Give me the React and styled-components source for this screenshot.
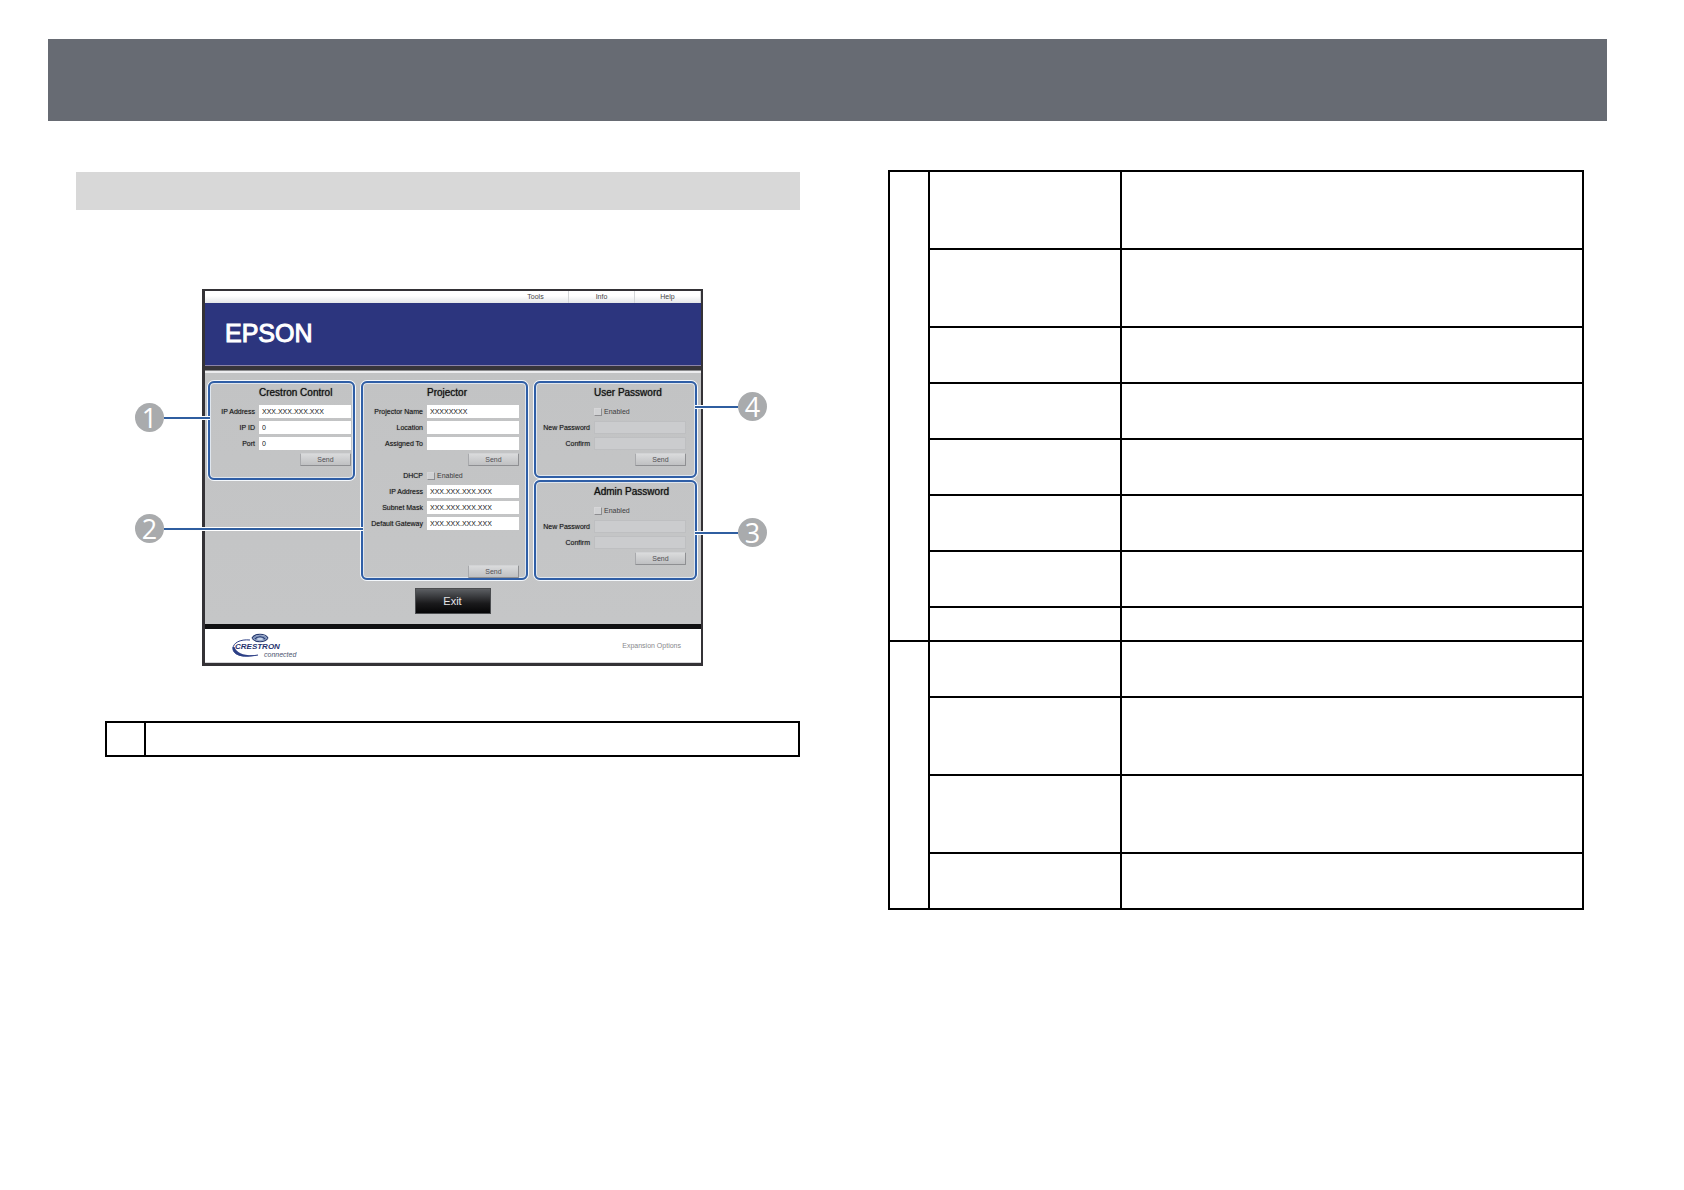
import React, { useId } from "react";
import styled, { createGlobalStyle } from "styled-components";

const GlobalStyle = createGlobalStyle`
  *, *::before, *::after { box-sizing: border-box; }
  body {
    margin: 0;
    background: #fff;
    color: #1c1c1e;
    font-family: "Liberation Sans", Arial, sans-serif;
  }
`;

const Page = styled.div`
  padding: 39px 0 48px;
`;

const Banner = styled.header`
  height: 82px;
  margin: 0 77px 0 48px;
  background: #676b73;
`;

const Columns = styled.main`
  display: grid;
  grid-template-columns: minmax(0, 724fr) minmax(0, 696fr);
  column-gap: 88px;
  align-items: start;
  margin: 49px 100px 0 76px;
`;

const LeftColumn = styled.div`
  padding-top: 2px;
`;

const SectionBar = styled.div`
  height: 38px;
  background: #d8d8d8;
`;

const Figure = styled.figure`
  width: 501px;
  margin: 79px 0 55px 126px;
`;

const Ruled = styled.table`
  width: ${(p) => (p.$indent ? `calc(100% - ${p.$indent}px)` : "100%")};
  margin-left: ${(p) => p.$indent || 0}px;
  border-collapse: collapse;
  table-layout: fixed;

  td {
    padding: 0;
    border: 2px solid #000;
  }
`;

const Col = styled.col`
  width: ${(p) => (p.$width ? `${p.$width}px` : "auto")};
`;

const Row = styled.tr`
  height: ${(p) => p.$height}px;
`;

const AppWindow = styled.div`
  border: solid #343236;
  border-width: 2px 2px 3px 3px;
`;

const MenuBar = styled.nav`
  display: flex;
  justify-content: flex-end;
  height: 12px;
  background: linear-gradient(#fff 40%, #e4e6e8);
`;

const MenuLink = styled.a`
  width: 66px;
  border-right: 1px solid #d4d6d8;
  color: #444;
  font-size: 7px;
  line-height: 12px;
  text-align: center;
  text-decoration: none;
`;

const Brand = styled.div`
  display: flex;
  align-items: center;
  height: 63px;
  padding: 0 20px 2px;
  background: #2c357e;
  border-bottom: 1px solid #8b83a8;
`;

const BrandName = styled.h1`
  margin: 0;
  color: #fff;
  font-size: 25px;
  line-height: 28px;
  font-weight: 400;
  -webkit-text-stroke: 1px #fff;
`;

const Body = styled.div`
  padding: 11px 4px 10px 3px;
  border-top: 4px solid #37353a;
  border-bottom: 5px solid #101012;
  background: linear-gradient(#8c8c8e 0 1px, #ececee 1px 3px, #c2c3c4 3px, #c5c6c7);
`;

const Panels = styled.div`
  display: grid;
  grid-template-columns: 147fr 167fr 163fr;
  gap: 6px;
  align-items: start;
  height: 199px;
`;

const Stack = styled.div`
  display: grid;
  grid-template-rows: 97fr 100fr;
  gap: 2px;
  height: 100%;
`;

const Panel = styled.section`
  position: relative;
  display: flex;
  flex-direction: column;
  gap: 3px;
  height: ${(p) => p.$height || "100%"};
  padding-right: ${(p) => p.$inset}px;
  border: 2px solid #2f5ea6;
  border-radius: 6px;
  box-shadow: 0 0 0 1px #f4f8fc, inset 0 0 0 1px #dfe6ee;
`;

const Line = styled.div`
  display: grid;
  grid-template-columns: minmax(0, 1fr) 92px;
  column-gap: 4px;
  align-items: center;
  min-height: 13px;
  margin-top: ${(p) => (p.$bottom ? "auto" : "0")};
`;

const PanelTitle = styled.h2`
  grid-column: 2;
  margin: 0;
  color: #111;
  font-size: 10px;
  line-height: 19px;
  font-weight: 400;
  white-space: nowrap;
  text-shadow: 0 0 1px #333;
`;

const Label = styled.label`
  color: #111;
  font-size: 7px;
  line-height: 13px;
  text-align: right;
  white-space: nowrap;
  text-shadow: 0 0 1px #777;
`;

const Input = styled.input`
  width: 100%;
  height: 13px;
  padding: 0 3px;
  border: 0;
  background: #fff;
  color: #111;
  font: 7px/13px "Liberation Sans", Arial, sans-serif;

  &:disabled {
    background: #cbccce;
    border: 1px solid #bebfc1;
  }
`;

const CheckLabel = styled.label`
  grid-column: 2;
  display: flex;
  align-items: center;
  gap: 2px;
  color: #3c3c40;
  font-size: 7px;
  line-height: 13px;
`;

const Check = styled.input`
  appearance: none;
  width: 8px;
  height: 8px;
  margin: 0;
  border: 1px solid;
  border-color: #d6d6d8 #8d8d90 #8d8d90 #d6d6d8;
  background: #d0d1d3;
`;

const SendButton = styled.button`
  grid-column: 2;
  justify-self: end;
  width: 51px;
  height: 13px;
  padding: 0;
  border: 1px solid;
  border-color: #d2d3d5 #8e8f92 #8e8f92 #a8a9ac;
  border-radius: 1px;
  background: linear-gradient(#dadbdc, #bfc0c2);
  color: #505054;
  font: 7px/11px "Liberation Sans", Arial, sans-serif;
`;

const ExitButton = styled.button`
  display: block;
  width: 76px;
  height: 26px;
  margin: 8px auto 0;
  padding: 0;
  border: 1px solid #4b4d50;
  background: linear-gradient(#5c5f63, #1a1a1c 60%, #050506);
  color: #e4e4e6;
  font: 11px/24px "Liberation Sans", Arial, sans-serif;
`;

const Footer = styled.footer`
  display: flex;
  align-items: center;
  justify-content: space-between;
  height: 34px;
  padding: 0 20px 0 26px;
  background: #fff;
  border-bottom: 1px solid #d5d5d8;
`;

const FooterLink = styled.a`
  color: #88888c;
  font-size: 7px;
  line-height: 8px;
  text-decoration: none;
`;

const LogoSvg = styled.svg`
  display: block;
  width: 68px;
  height: 28px;
  font-family: "Liberation Sans", Arial, sans-serif;
  font-style: italic;
`;

const Callout = styled.div`
  position: absolute;
  top: ${(p) => p.$top}px;
  ${(p) => p.$side}: 100%;
  display: flex;
  flex-direction: ${(p) => (p.$side === "left" ? "row" : "row-reverse")};
  align-items: center;
`;

const Leader = styled.span`
  width: ${(p) => p.$length}px;
  height: 2px;
  background: #2f5ea0;
  box-shadow: 0 1px #fff, 0 -1px #fff;
`;

const Badge = styled.span`
  width: 29px;
  height: 29px;
  border-radius: 50%;
  background: #a9abad;
  color: #fff;
  font: 400 27px/29px "Open Sans", sans-serif;
  text-align: center;
`;

function Marker({ number, side, top, length }) {
  return (
    <Callout $side={side} $top={top}>
      <Leader $length={length} />
      <Badge>{number}</Badge>
    </Callout>
  );
}

function Title({ children }) {
  return (
    <Line>
      <PanelTitle>{children}</PanelTitle>
    </Line>
  );
}

function Field({ label, value = "", disabled, type = "text" }) {
  const id = useId();
  return (
    <Line>
      <Label htmlFor={id}>{label}</Label>
      <Input id={id} type={type} defaultValue={value} disabled={disabled} />
    </Line>
  );
}

function Toggle({ label }) {
  const id = useId();
  return (
    <Line>
      {label && <Label htmlFor={id}>{label}</Label>}
      <CheckLabel htmlFor={id}>
        <Check id={id} type="checkbox" />
        Enabled
      </CheckLabel>
    </Line>
  );
}

function Send({ bottom }) {
  return (
    <Line $bottom={bottom}>
      <SendButton type="button">Send</SendButton>
    </Line>
  );
}

function PasswordPanel({ title, children }) {
  return (
    <Panel $inset={9}>
      <Title>{title}</Title>
      <Toggle />
      <Field label="New Password" type="password" disabled />
      <Field label="Confirm" type="password" disabled />
      <Send />
      {children}
    </Panel>
  );
}

function CrestronLogo() {
  return (
    <LogoSvg viewBox="0 0 68 28" role="img" aria-label="Crestron connected">
      <path
        d="M19 8C9 7 2 11 2 16.500c0 6 8 9.500 25 6.500"
        fill="none"
        stroke="#2c3f86"
        strokeWidth="1"
      />
      <path d="M1.500 15c0 8 9 12 26 8-13 1.400-22-1.500-24-8z" fill="#2c3f86" />
      <ellipse cx="29" cy="6" rx="7" ry="3" fill="#8296bd" />
      <path
        d="M21 6c3-5 13-5 16 0M21 6c3 5 13 5 16 0M24 7c2-3 8-3 10 0"
        fill="none"
        stroke="#24386f"
        strokeWidth="1.200"
      />
      <ellipse cx="29" cy="7" rx="3" ry="1.200" fill="#c4d2e8" />
      <text x="4" y="17" fontSize="8" fontWeight="700" fill="#26336f">
        CRESTRON
      </text>
      <text x="33" y="25" fontSize="7" fill="#4b5470">
        connected
      </text>
    </LogoSvg>
  );
}

function ControlWindow() {
  return (
    <AppWindow>
      <MenuBar>
        <MenuLink href="#tools">Tools</MenuLink>
        <MenuLink href="#info">Info</MenuLink>
        <MenuLink href="#help">Help</MenuLink>
      </MenuBar>
      <Brand>
        <BrandName>EPSON</BrandName>
      </Brand>
      <Body>
        <Panels>
          <Panel $inset={2} $height="99px">
            <Title>Crestron Control</Title>
            <Field label="IP Address" value="XXX.XXX.XXX.XXX" />
            <Field label="IP ID" value="0" />
            <Field label="Port" value="0" />
            <Send />
            <Marker number="1" side="right" top={20} length={46} />
          </Panel>
          <Panel $inset={7}>
            <Title>Projector</Title>
            <Field label="Projector Name" value="XXXXXXXX" />
            <Field label="Location" />
            <Field label="Assigned To" />
            <Send />
            <Toggle label="DHCP" />
            <Field label="IP Address" value="XXX.XXX.XXX.XXX" />
            <Field label="Subnet Mask" value="XXX.XXX.XXX.XXX" />
            <Field label="Default Gateway" value="XXX.XXX.XXX.XXX" />
            <Send bottom />
            <Marker number="2" side="right" top={131} length={199} />
          </Panel>
          <Stack>
            <PasswordPanel title="User Password">
              <Marker number="4" side="left" top={9} length={43} />
            </PasswordPanel>
            <PasswordPanel title="Admin Password">
              <Marker number="3" side="left" top={36} length={43} />
            </PasswordPanel>
          </Stack>
        </Panels>
        <ExitButton type="button">Exit</ExitButton>
      </Body>
      <Footer>
        <CrestronLogo />
        <FooterLink href="#expansion">Expansion Options</FooterLink>
      </Footer>
    </AppWindow>
  );
}

const GROUPS = [
  [78, 78, 56, 56, 56, 56, 56, 34],
  [56, 78, 78, 56],
];

function DetailTable() {
  return (
    <Ruled>
      <colgroup>
        <Col $width={40} />
        <Col $width={192} />
        <Col />
      </colgroup>
      {GROUPS.map((heights, g) => (
        <tbody key={g}>
          {heights.map((height, i) => (
            <Row key={i} $height={height}>
              {i === 0 && <td rowSpan={heights.length} />}
              <td />
              <td />
            </Row>
          ))}
        </tbody>
      ))}
    </Ruled>
  );
}

export default function App() {
  return (
    <>
      <GlobalStyle />
      <Page>
        <Banner />
        <Columns>
          <LeftColumn>
            <SectionBar />
            <Figure>
              <ControlWindow />
            </Figure>
            <Ruled $indent={29}>
              <colgroup>
                <Col $width={39} />
                <Col />
              </colgroup>
              <tbody>
                <Row $height={34}>
                  <td />
                  <td />
                </Row>
              </tbody>
            </Ruled>
          </LeftColumn>
          <DetailTable />
        </Columns>
      </Page>
    </>
  );
}
